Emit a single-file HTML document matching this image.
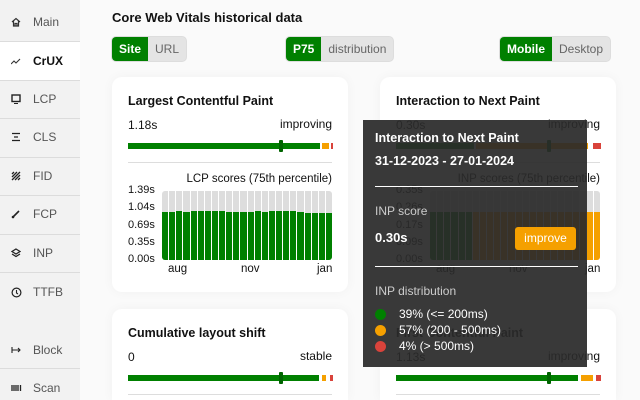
<!DOCTYPE html>
<html style="width:640px;height:400px;overflow:hidden"><head><meta charset="utf-8"><style>
*{box-sizing:border-box;margin:0;padding:0}
body{width:640px;height:400px;overflow:hidden;background:#fafafa;font-family:"Liberation Sans",sans-serif;color:#111;position:relative;font-size:12px}
.side{position:absolute;left:0;top:0;width:80px;height:400px;background:#f2f2f2}
.it{position:absolute;left:0;width:80px;height:38px;display:flex;align-items:center;color:#555;font-size:12px}
.it svg{position:absolute;left:11px}
.it span{position:absolute;left:33px}
.sep{position:absolute;left:0;width:80px;height:1px;background:#dcdcdc}
.abs{position:absolute}
.tg{position:absolute;top:37px;height:24px;display:flex;border-radius:4px;overflow:hidden;background:#e4e4e4;box-shadow:0 0 0 1px #ddd;font-size:12px}
.tg div{padding:0 7px;line-height:24px;color:#666}
.tg .on{background:#008000;color:#fff;font-weight:bold}
.card{position:absolute;width:236px;background:#fff;border-radius:10px;box-shadow:0 0 12px rgba(0,0,0,.04)}
.ct{position:absolute;left:16px;top:17px;font-weight:bold;font-size:12.5px}
.vl{position:absolute;left:16px;top:41px}
.vr{position:absolute;right:16px;top:40px}
.bar{position:absolute;left:16px;top:66px;width:204px;height:6px}
.bar .g{position:absolute;left:0;top:0;height:6px;background:#008000}
.bar .o{position:absolute;top:0;height:6px;background:#f5a000}
.bar .r{position:absolute;top:0;height:6px;background:#d9433b}
.bar .m{position:absolute;top:-3px;width:4px;height:12px;background:#006400;border-radius:1px}
.div{position:absolute;left:16px;top:85px;width:204px;height:1px;background:#ddd}
.cl{position:absolute;right:16px;top:96px;font-size:11.5px}
.yl{position:absolute;left:16px;font-size:11px}
.chart{position:absolute;left:50px;top:114px;width:170px;height:69px;display:flex;gap:1px;border-radius:3px;overflow:hidden}
.chart div{flex:1;background:#ddd;position:relative}
.chart div i{position:absolute;left:0;right:0;bottom:0}
.xl{position:absolute;top:186px;font-size:11.5px}
.tip{position:absolute;left:363px;top:120px;width:224px;height:247px;background:rgba(42,42,42,.93);color:#fff}
.dot{position:absolute;left:12px;width:11px;height:11px;border-radius:50%}
</style></head><body>
<div class="side">
 <div class="it" style="top:3px"><svg width="10" height="10" viewBox="0 0 10 10"><path d="M1 5L5 1.5 9 5M2.5 4v5h5V4M4 9V6.5h2V9" fill="none" stroke="#333" stroke-width="1.2"/></svg><span>Main</span></div>
 <div class="sep" style="top:41px"></div>
 <div class="it" style="top:42px;background:#fff;color:#111;font-weight:bold"><svg width="10" height="10" viewBox="0 0 10 10"><path d="M0 8L3 5 5 7 9 3" fill="none" stroke="#333" stroke-width="1.1"/></svg><span>CrUX</span></div>
 <div class="sep" style="top:80px"></div>
 <div class="it" style="top:80px"><svg width="10" height="10" viewBox="0 0 10 10"><rect x="1" y="1" width="8" height="6.5" fill="none" stroke="#222" stroke-width="1.4"/><path d="M3 9.5h4" stroke="#222"/></svg><span>LCP</span></div>
 <div class="sep" style="top:118px"></div>
 <div class="it" style="top:118px"><svg width="10" height="10" viewBox="0 0 10 10"><path d="M1 1.5h8M3 5h4M1 8.5h8" stroke="#222" stroke-width="1.2"/></svg><span>CLS</span></div>
 <div class="sep" style="top:157px"></div>
 <div class="it" style="top:157px"><svg width="10" height="10" viewBox="0 0 10 10"><path d="M1 3L3 1M1 6L6 1M1 9L9 1M4 9L9 4M7 9L9 7" stroke="#222" stroke-width="1.3"/></svg><span>FID</span></div>
 <div class="sep" style="top:195px"></div>
 <div class="it" style="top:195px"><svg width="10" height="10" viewBox="0 0 10 10"><path d="M2 8L8 2" stroke="#222" stroke-width="1.6"/><circle cx="2" cy="8" r="1.3" fill="#222"/></svg><span>FCP</span></div>
 <div class="sep" style="top:234px"></div>
 <div class="it" style="top:234px"><svg width="10" height="10" viewBox="0 0 10 10"><path d="M5 1L9 3.5 5 6 1 3.5zM1 6L5 8.5 9 6" fill="none" stroke="#222" stroke-width="1.2"/></svg><span>INP</span></div>
 <div class="sep" style="top:272px"></div>
 <div class="it" style="top:273px"><svg width="11" height="11" viewBox="0 0 11 11"><circle cx="5.5" cy="5.5" r="4.4" fill="none" stroke="#222" stroke-width="1.2"/><path d="M5.5 3v3l1.5 1" fill="none" stroke="#222" stroke-width="1.1"/></svg><span>TTFB</span></div>
 <div class="it" style="top:331px"><svg width="11" height="10" viewBox="0 0 11 10"><path d="M1 2v6M1 5h8M7 3l2 2-2 2" fill="none" stroke="#222" stroke-width="1.1"/></svg><span>Block</span></div>
 <div class="sep" style="top:368px"></div>
 <div class="it" style="top:369px"><svg width="12" height="10" viewBox="0 0 12 10"><path d="M1 2v6M3 2v6M5 2v6M7 2v6M9.5 2v6" stroke="#222" stroke-width="1.3"/></svg><span>Scan</span></div>
</div>

<div class="abs" style="left:112px;top:10px;font-weight:bold;font-size:13px">Core Web Vitals historical data</div>
<div class="tg" style="left:112px"><div class="on">Site</div><div>URL</div></div>
<div class="tg" style="left:286px"><div class="on">P75</div><div>distribution</div></div>
<div class="tg" style="left:500px"><div class="on">Mobile</div><div>Desktop</div></div>

<div class="card" style="left:112px;top:77px;height:215px">
 <div class="ct">Largest Contentful Paint</div>
 <div class="vl">1.18s</div><div class="vr">improving</div>
 <div class="bar"><div class="g" style="width:192px"></div><div class="o" style="left:194px;width:7px"></div><div class="r" style="left:203px;width:2px"></div><div class="m" style="left:151px"></div></div>
 <div class="div"></div>
 <div class="cl">LCP scores (75th percentile)</div>
 <div class="yl" style="top:107px">1.39s</div><div class="yl" style="top:124px">1.04s</div><div class="yl" style="top:142px">0.69s</div><div class="yl" style="top:159px">0.35s</div><div class="yl" style="top:176px">0.00s</div>
 <div class="chart" id="c1"></div>
 <div class="xl" style="left:56px">aug</div><div class="xl" style="left:129px">nov</div><div class="xl" style="left:205px">jan</div>
</div>

<div class="card" style="left:380px;top:77px;height:215px">
 <div class="ct">Interaction to Next Paint</div>
 <div class="vl">0.30s</div><div class="vr">improving</div>
 <div class="bar"><div class="g" style="width:78px"></div><div class="o" style="left:80px;width:112px"></div><div class="r" style="left:197px;width:8px"></div><div class="m" style="left:151px"></div></div>
 <div class="div"></div>
 <div class="cl">INP scores (75th percentile)</div>
 <div class="yl" style="top:107px">0.35s</div><div class="yl" style="top:124px">0.26s</div><div class="yl" style="top:142px">0.17s</div><div class="yl" style="top:159px">0.09s</div><div class="yl" style="top:176px">0.00s</div>
 <div class="chart" id="c2"></div>
 <div class="xl" style="left:56px">aug</div><div class="xl" style="left:129px">nov</div><div class="xl" style="left:205px">jan</div>
</div>

<div class="card" style="left:112px;top:309px;height:91px;border-radius:10px 10px 0 0">
 <div class="ct">Cumulative layout shift</div>
 <div class="vl">0</div><div class="vr">stable</div>
 <div class="bar"><div class="g" style="width:191px"></div><div class="o" style="left:194px;width:4px"></div><div class="r" style="left:202px;width:3px"></div><div class="m" style="left:151px"></div></div>
 <div class="div"></div>
</div>

<div class="card" style="left:380px;top:309px;height:91px;border-radius:10px 10px 0 0">
 <div class="ct">First Contentful Paint</div>
 <div class="vl">1.13s</div><div class="vr">improving</div>
 <div class="bar"><div class="g" style="width:182px"></div><div class="o" style="left:185px;width:12px"></div><div class="r" style="left:200px;width:5px"></div><div class="m" style="left:151px"></div></div>
 <div class="div"></div>
</div>

<div class="tip">
 <div class="abs" style="left:12px;top:11px;font-weight:bold;font-size:12.5px">Interaction to Next Paint</div>
 <div class="abs" style="left:12px;top:34px;font-weight:bold;font-size:12.5px">31-12-2023 - 27-01-2024</div>
 <div class="abs" style="left:12px;top:66px;width:203px;height:1px;background:#fff"></div>
 <div class="abs" style="left:12px;top:84px;color:#ccc">INP score</div>
 <div class="abs" style="left:12px;top:110px;font-weight:bold;font-size:13px">0.30s</div>
 <div class="abs" style="left:152px;top:107px;width:61px;height:23px;background:#f5a000;border-radius:3px;text-align:center;line-height:23px">improve</div>
 <div class="abs" style="left:12px;top:146px;width:203px;height:1px;background:#fff"></div>
 <div class="abs" style="left:12px;top:164px;color:#ccc">INP distribution</div>
 <div class="dot" style="top:189px;background:#008000"></div><div class="abs" style="left:36px;top:187px">39% (&lt;= 200ms)</div>
 <div class="dot" style="top:205px;background:#f5a000"></div><div class="abs" style="left:36px;top:203px">57% (200 - 500ms)</div>
 <div class="dot" style="top:221px;background:#d9433b"></div><div class="abs" style="left:36px;top:219px">4% (&gt; 500ms)</div>
</div>
<script>
var h1=[48,48,49,48,49,49,49,49,49,48,48,48,48,49,48,49,49,49,49,48,47,47,47,47];
var c1=document.getElementById('c1'),c2=document.getElementById('c2');
h1.forEach(function(h){c1.innerHTML+='<div><i style="height:'+h+'px;background:#008000"></i></div>';});
for(var i=0;i<24;i++){var col=i<6?'#008000':'#f5a000';c2.innerHTML+='<div><i style="height:48px;background:'+col+'"></i></div>';}
</script>
</body></html>
